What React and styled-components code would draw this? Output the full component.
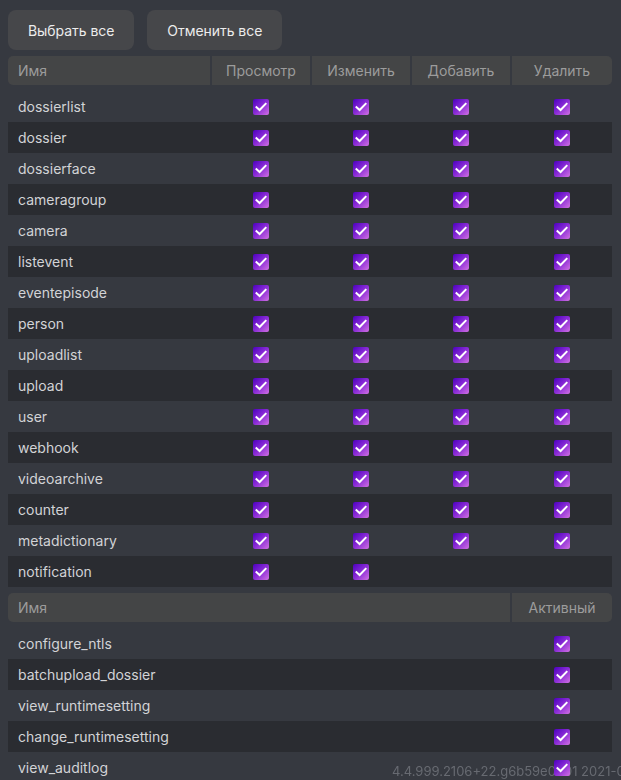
import React from "react";
import styled, { createGlobalStyle } from "styled-components";

const GlobalStyle = createGlobalStyle`
  html, body {
    margin: 0;
    padding: 0;
    background: #363940;
    overflow-x: hidden;
  }
  body {
    font-family: 'Inter', 'Noto Sans', sans-serif;
    font-size: 14px;
    color: #d2d3d6;
  }
`;

const Page = styled.div`
  padding: 10px 8px 0 8px;
  width: 604px;
`;

const Toolbar = styled.div`
  display: flex;
  gap: 13px;
`;

const Button = styled.button`
  height: 40px;
  padding: 0 20px;
  border: none;
  border-radius: 8px;
  background: #46474a;
  color: #ececec;
  font-family: inherit;
  font-size: 14px;
  letter-spacing: -0.05px;
  cursor: pointer;
`;

const Table = styled.div`
  margin-top: 6px;
`;

const Header = styled.div`
  display: grid;
  grid-template-columns: ${(p) => p.$cols};
  column-gap: 2px;
  border-radius: 5px;
  overflow: hidden;
  margin-bottom: 6px;
`;

const HeadCell = styled.div`
  height: 29px;
  display: flex;
  align-items: center;
  justify-content: ${(p) => (p.$left ? "flex-start" : "center")};
  padding: ${(p) => (p.$left ? "0 10px" : "0")};
  background: #444546;
  color: #9c9c9c;
`;

const Row = styled.div`
  display: grid;
  grid-template-columns: ${(p) => p.$cols};
  column-gap: 2px;
  height: 31px;
  background: ${(p) => (p.$dark ? "#2a2c31" : "transparent")};
`;

const NameCell = styled.div`
  display: flex;
  align-items: center;
  padding: 0 10px;
`;

const BoxCell = styled.div`
  display: flex;
  align-items: center;
  justify-content: center;
`;

const Box = styled.span`
  position: relative;
  z-index: 1;
  width: 16px;
  height: 16px;
  border-radius: 2px;
  background: linear-gradient(135deg, #4c00bf 0%, #8a2cd6 50%, #d070e2 100%);
  display: flex;
  align-items: center;
  justify-content: center;
`;

const Version = styled.div`
  position: fixed;
  left: 392px;
  bottom: 1px;
  white-space: nowrap;
  font-size: 13px;
  color: #676a71;
  z-index: 0;
`;

function Check() {
  return (
    <Box>
      <svg width="12" height="10" viewBox="0 0 12 10">
        <path d="M1.5 5.2 L4.6 8 L10.6 1.8" fill="none" stroke="#fff" strokeWidth="2" strokeLinecap="square" />
      </svg>
    </Box>
  );
}

const permCols = "202px 98px 98px 98px 100px";
const specCols = "502px 100px";

const perms = [
  ["dossierlist", 4],
  ["dossier", 4],
  ["dossierface", 4],
  ["cameragroup", 4],
  ["camera", 4],
  ["listevent", 4],
  ["eventepisode", 4],
  ["person", 4],
  ["uploadlist", 4],
  ["upload", 4],
  ["user", 4],
  ["webhook", 4],
  ["videoarchive", 4],
  ["counter", 4],
  ["metadictionary", 4],
  ["notification", 2],
];

const special = [
  "configure_ntls",
  "batchupload_dossier",
  "view_runtimesetting",
  "change_runtimesetting",
  "view_auditlog",
];

export default function App() {
  return (
    <>
      <GlobalStyle />
      <Version>4.4.999.2106+22.g6b59e0901 2021-06-07</Version>
      <Page>
        <Toolbar>
          <Button>Выбрать все</Button>
          <Button>Отменить все</Button>
        </Toolbar>
        <Table>
          <Header $cols={permCols}>
            <HeadCell $left>Имя</HeadCell>
            <HeadCell>Просмотр</HeadCell>
            <HeadCell>Изменить</HeadCell>
            <HeadCell>Добавить</HeadCell>
            <HeadCell>Удалить</HeadCell>
          </Header>
          {perms.map(([name, count], i) => (
            <Row key={name} $cols={permCols} $dark={i % 2 === 1}>
              <NameCell>{name}</NameCell>
              {[0, 1, 2, 3].map((c) => (
                <BoxCell key={c}>{c < count && <Check />}</BoxCell>
              ))}
            </Row>
          ))}
        </Table>
        <Table>
          <Header $cols={specCols}>
            <HeadCell $left>Имя</HeadCell>
            <HeadCell>Активный</HeadCell>
          </Header>
          {special.map((name, i) => (
            <Row key={name} $cols={specCols} $dark={i % 2 === 1}>
              <NameCell>{name}</NameCell>
              <BoxCell>
                <Check />
              </BoxCell>
            </Row>
          ))}
        </Table>
      </Page>
    </>
  );
}
